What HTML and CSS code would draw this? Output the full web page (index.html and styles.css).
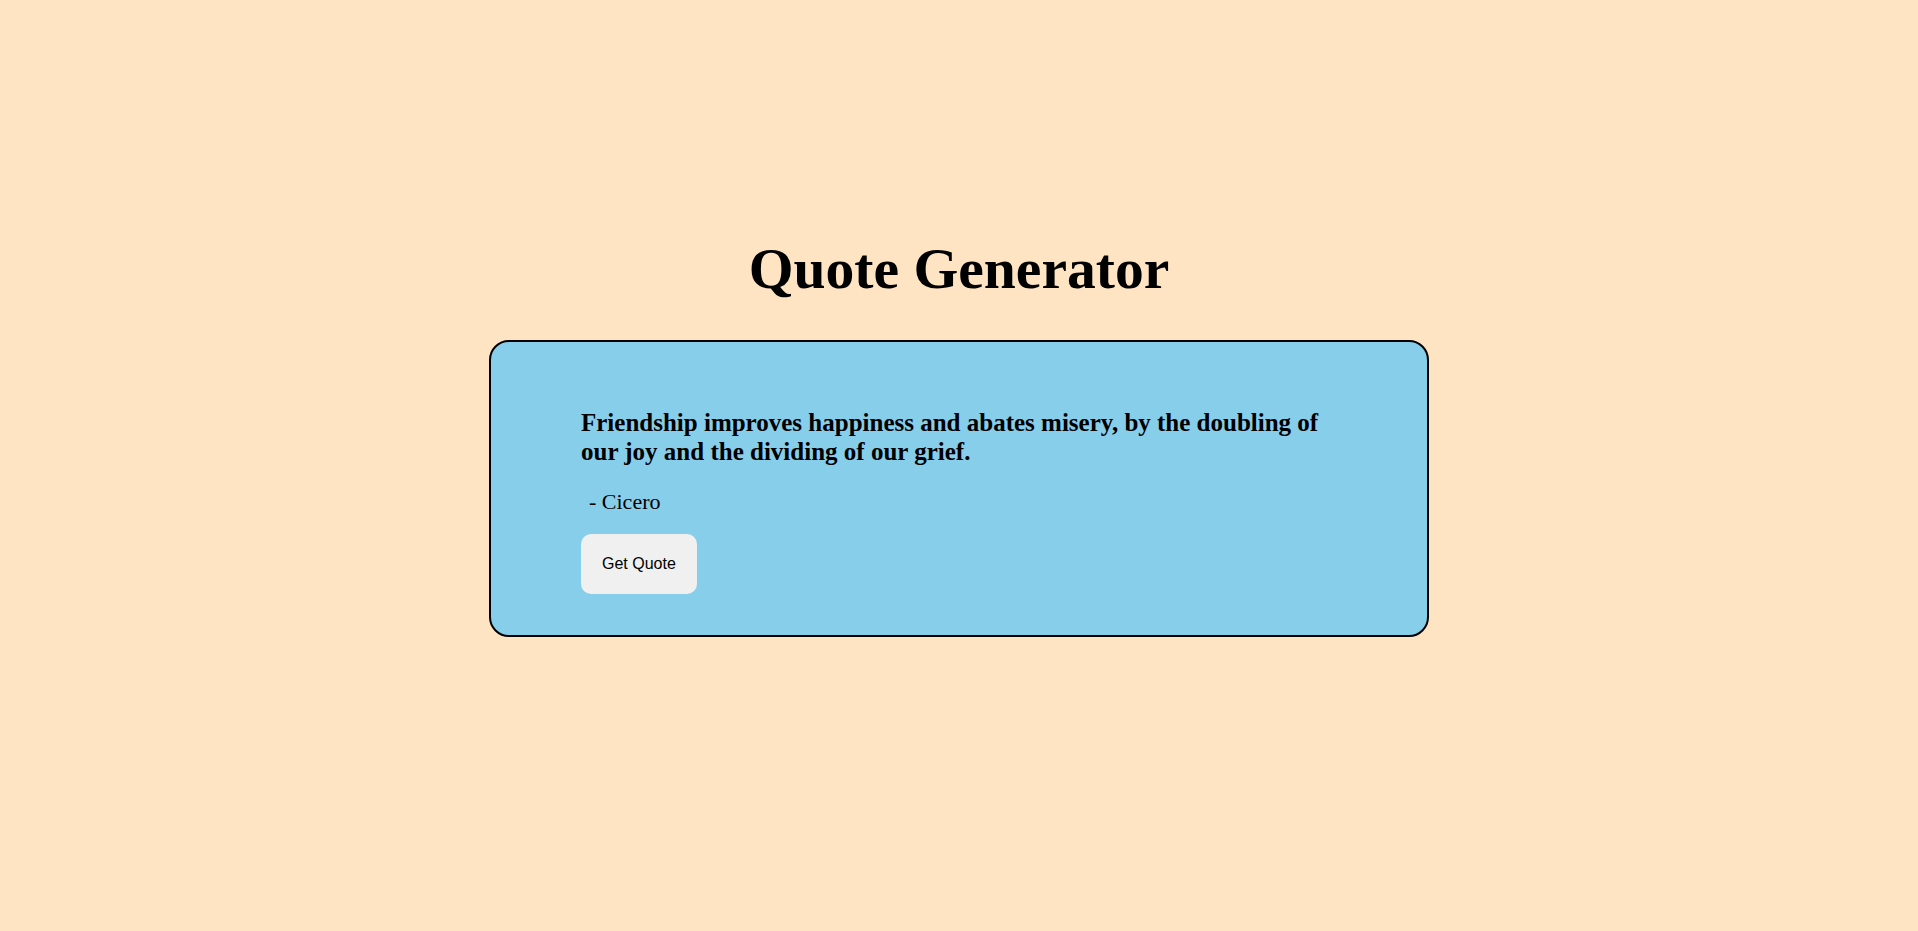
FILE: index.html
```html
<!DOCTYPE html>
<html>
<head>
<meta charset="utf-8">
<title>Quote Generator</title>
<link rel="stylesheet" href="styles.css">
</head>
<body>
<main class="page">
  <h1 class="title">Quote Generator</h1>
  <section class="card">
    <p class="quote">Friendship improves happiness and abates misery, by the doubling of our joy and the dividing of our grief.</p>
    <p class="author">- Cicero</p>
    <button class="btn">Get Quote</button>
  </section>
</main>
</body>
</html>
```
FILE: styles.css
```css
html, body {
  margin: 0;
  padding: 0;
}
body {
  background: #ffe4c4;
  font-family: "Liberation Serif", "Times New Roman", serif;
  color: #000;
}
.page {
  min-height: 931px;
  display: flex;
  flex-direction: column;
  align-items: center;
  box-sizing: border-box;
  padding-top: 236px;
}
.title {
  font-size: 57.6px;
  font-weight: bold;
  margin: 0 0 38px;
  line-height: 1.15;
}
.card {
  width: 756px;
  background: #87ceeb;
  border: 2px solid #000;
  border-radius: 20px;
  padding: 67px 90px 41px;
}
.quote {
  font-size: 25px;
  font-weight: bold;
  margin: 0 0 22px;
  line-height: 1.15;
}
.author {
  font-size: 22px;
  margin: 0 0 19px;
  padding-left: 8px;
}
.btn {
  font-family: "Liberation Sans", Arial, sans-serif;
  font-size: 16px;
  background: #f0f0f0;
  color: #000;
  border: none;
  border-radius: 10px;
  padding: 21px 21px;
}
```
